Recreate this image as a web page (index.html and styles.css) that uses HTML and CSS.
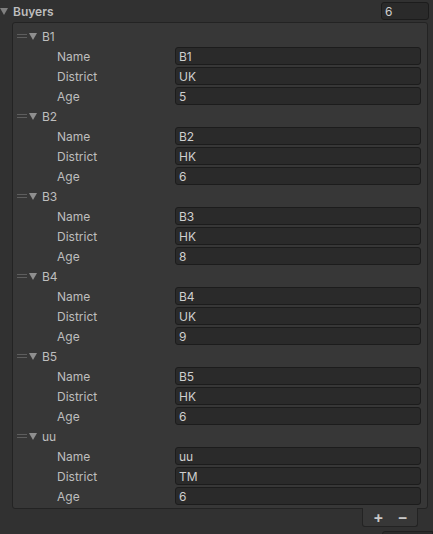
FILE: index.html
```html
<!DOCTYPE html>
<html lang="en">
<head>
  <meta charset="utf-8" />
  <title>Inspector — Buyers</title>
  <link rel="stylesheet" href="styles.css">
</head>
<body>
  <div class="inspector">
    <div class="list-head">
      <span class="fold open"></span>
      <span class="list-title">Buyers</span>
      <input class="field size-field" type="text" value="6" />
    </div>

    <div class="list" id="buyers"></div>

    <div class="list-footer">
      <button class="foot-btn">+</button>
      <button class="foot-btn">&minus;</button>
    </div>
    <div class="next-box"></div>
  </div>

  <script>
    const buyers = [
      { name: 'B1', district: 'UK', age: 5 },
      { name: 'B2', district: 'HK', age: 6 },
      { name: 'B3', district: 'HK', age: 8 },
      { name: 'B4', district: 'UK', age: 9 },
      { name: 'B5', district: 'HK', age: 6 },
      { name: 'uu', district: 'TM', age: 6 }
    ];

    const list = document.getElementById('buyers');
    buyers.forEach(b => {
      const el = document.createElement('div');
      el.className = 'element';
      el.innerHTML = `
        <div class="element-head">
          <span class="handle"></span>
          <span class="fold"></span>
          <span class="element-title">${b.name}</span>
        </div>
        <div class="prop"><label>Name</label><input class="field" type="text" value="${b.name}" /></div>
        <div class="prop"><label>District</label><input class="field" type="text" value="${b.district}" /></div>
        <div class="prop"><label>Age</label><input class="field" type="text" value="${b.age}" /></div>`;
      list.appendChild(el);
    });
  </script>
</body>
</html>
```

FILE: styles.css
```css
:root {
  --bg: #313131;
  --box: #373737;
  --box-border: #232323;
  --field: #2a2a2a;
  --field-border: #1c1c1c;
  --text: #bebebe;
  --field-text: #cfcfcf;
  --fold: #8f8f8f;
}

*, *::before, *::after {
  box-sizing: border-box;
  margin: 0;
  padding: 0;
}

body {
  background: var(--bg);
  color: var(--text);
  font-family: Inter, 'Noto Sans', sans-serif;
  font-size: 12px;
  height: 534px;
  overflow: hidden;
}

/* Foldout triangle */
.fold {
  width: 0;
  height: 0;
  border-left: 4px solid transparent;
  border-right: 4px solid transparent;
  border-top: 7px solid var(--fold);
  flex-shrink: 0;
}

.list-head {
  display: flex;
  align-items: center;
  height: 22px;
  padding: 0 4px 0 0;
}

.list-head .fold {
  border-top-color: #808080;
  margin-right: 5px;
}

.list-title {
  font-weight: 600;
  flex: 1;
}

.field {
  display: block;
  height: 18px;
  background: var(--field);
  border: 1px solid var(--field-border);
  border-radius: 3px;
  color: var(--field-text);
  font-family: inherit;
  font-size: 12px;
  padding: 0 3px;
  outline: none;
}

.size-field {
  width: 48px;
}

/* List body */
.list {
  margin: 0 5px 0 12px;
  background: var(--box);
  border: 1px solid var(--box-border);
  border-radius: 3px;
  padding: 3px 6px 2px 4px;
}

.element-head {
  display: flex;
  align-items: center;
  height: 20px;
}

.handle {
  width: 10px;
  height: 4px;
  border-top: 1px solid #5e5e5e;
  border-bottom: 1px solid #5e5e5e;
  margin-right: 2px;
}

.element-head .fold {
  margin-right: 5px;
}

.prop {
  display: flex;
  align-items: center;
  height: 20px;
  padding-left: 40px;
}

.prop label {
  width: 118px;
}

.prop .field {
  flex: 1;
}

/* + / - tab under the list */
.list-footer {
  display: flex;
  justify-content: space-between;
  align-items: center;
  width: 56px;
  height: 19px;
  margin: -1px 15px 0 auto;
  padding: 0 9px 0 10px;
  background: var(--box);
  border: 1px solid var(--box-border);
  border-top: none;
  border-radius: 0 0 3px 3px;
}

.foot-btn {
  background: none;
  border: none;
  color: #c8c8c8;
  font-family: inherit;
  font-size: 16px;
  font-weight: 600;
  line-height: 1;
  cursor: pointer;
}

.next-box {
  height: 10px;
  margin: 4px 0 0 382px;
  background: #2b2b2b;
  border: 1px solid #1f1f1f;
  border-radius: 3px 0 0 0;
}
```
